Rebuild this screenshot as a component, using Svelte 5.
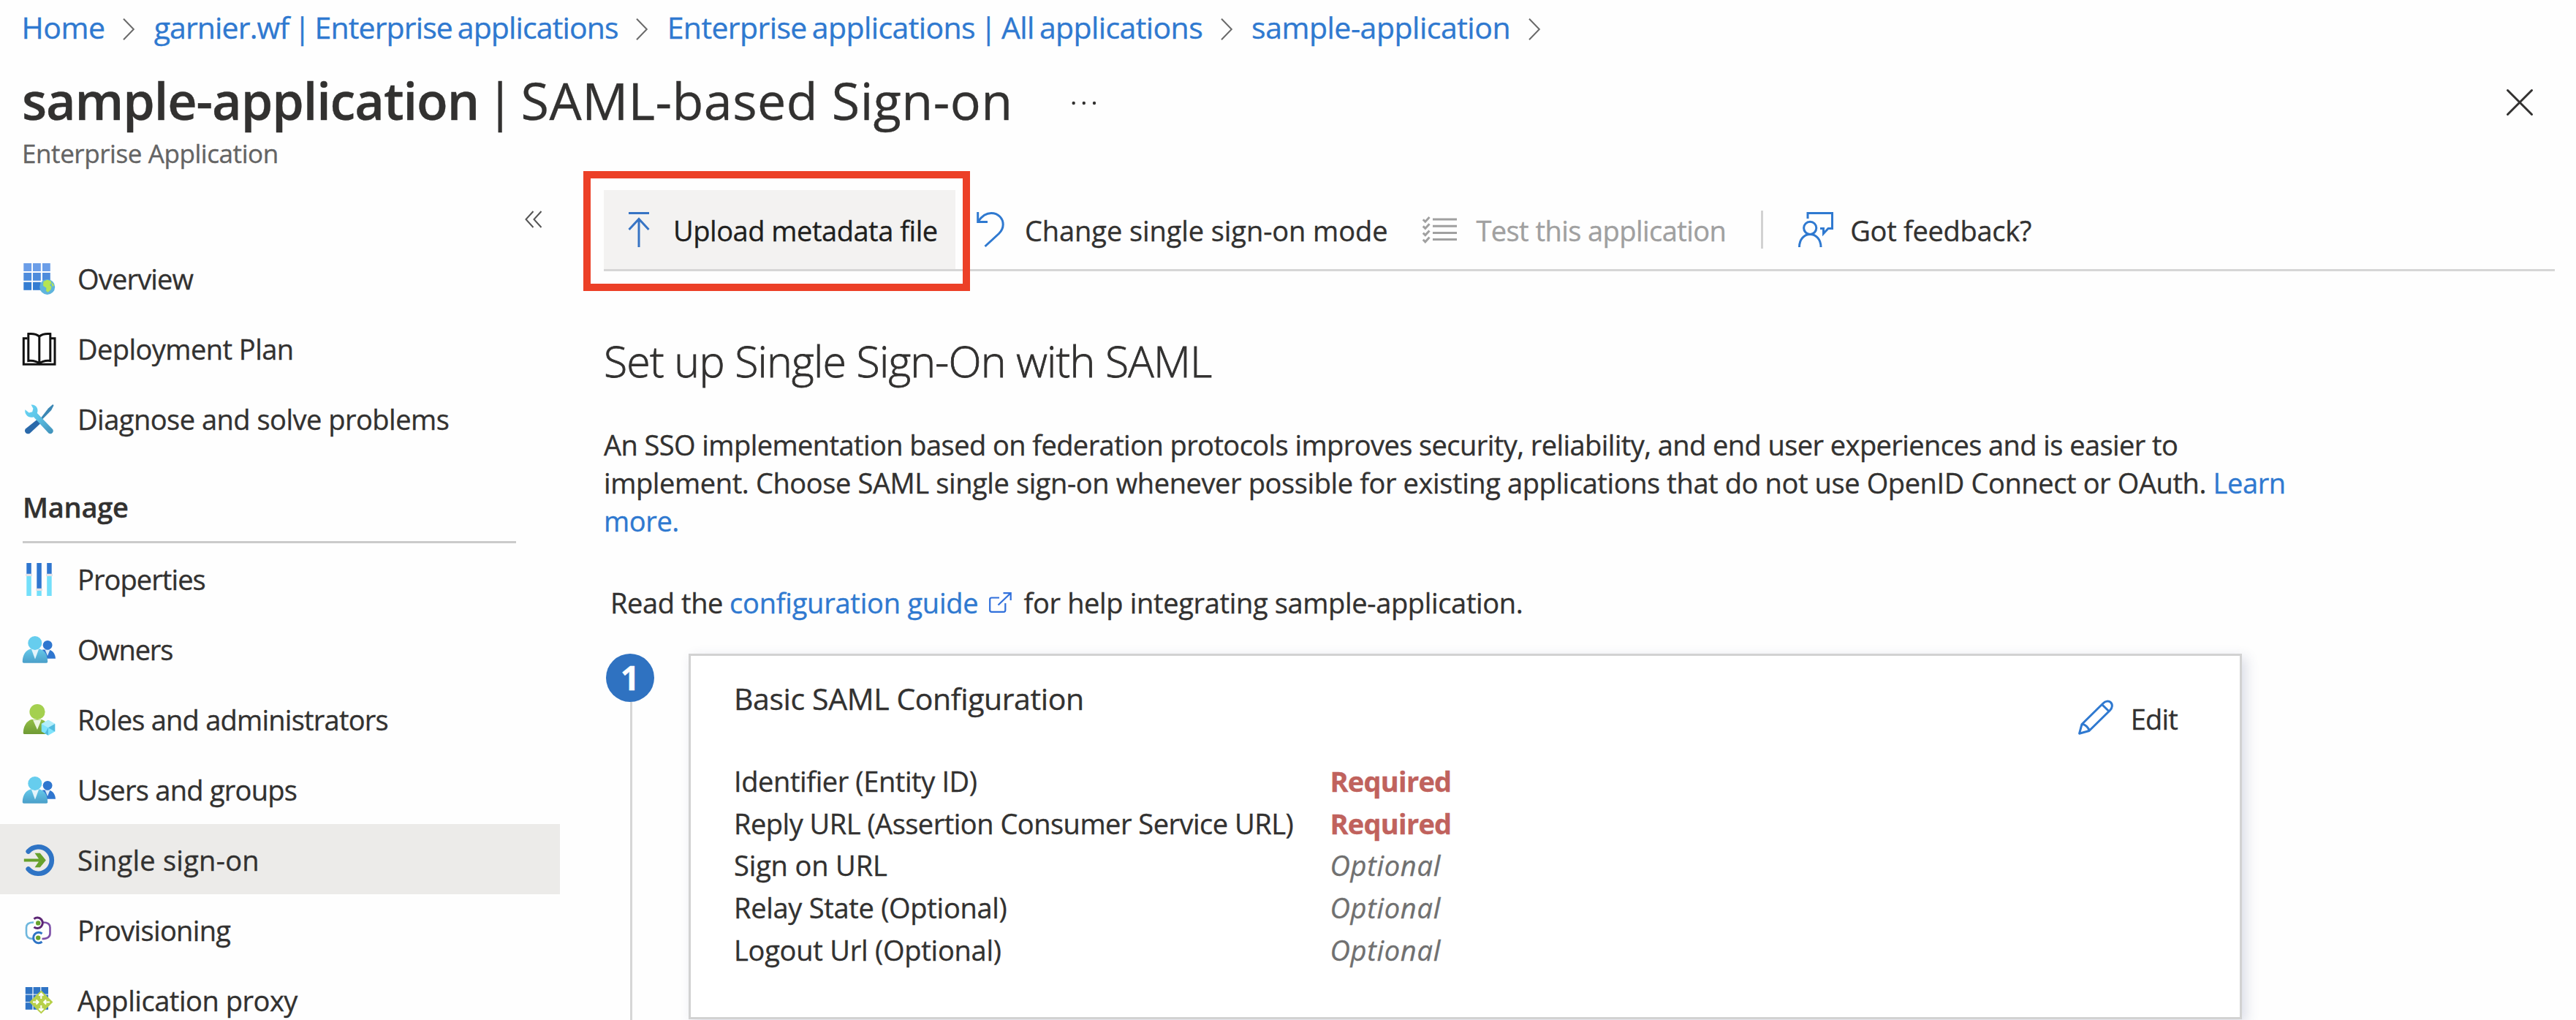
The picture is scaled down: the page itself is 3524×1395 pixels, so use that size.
<script>
  // `track` is the letter-spacing (px) of each label.
  const crumbs = [
    { text: 'Home', track: -0.43 },
    { text: 'garnier.wf | Enterprise applications', track: -0.87 },
    { text: 'Enterprise applications | All applications', track: -0.6 },
    { text: 'sample-application', track: -0.49 }
  ];
  const general = [
    { icon: 'overview', text: 'Overview', track: -0.82 },
    { icon: 'book', text: 'Deployment Plan', track: -0.55 },
    { icon: 'tools', text: 'Diagnose and solve problems', track: -0.5 }
  ];
  const manage = [
    { icon: 'properties', text: 'Properties', track: -0.92 },
    { icon: 'people', text: 'Owners', track: -1.2 },
    { icon: 'roles', text: 'Roles and administrators', track: -0.76 },
    { icon: 'people', text: 'Users and groups', track: -0.73 },
    { icon: 'sso', text: 'Single sign-on', track: 0.26, selected: true },
    { icon: 'provisioning', text: 'Provisioning', track: -0.66 },
    { icon: 'proxy', text: 'Application proxy', track: -0.46 }
  ];
  const fields = [
    { label: 'Identifier (Entity ID)', track: -0.4, required: true },
    { label: 'Reply URL (Assertion Consumer Service URL)', track: -0.5, required: true },
    { label: 'Sign on URL', track: -0.15, required: false },
    { label: 'Relay State (Optional)', track: -0.29, required: false },
    { label: 'Logout Url (Optional)', track: -0.24, required: false }
  ];
</script>

{#snippet navIcon(name)}
  <svg class="nav-icon" viewBox="0 0 48 48">
    {#if name === 'overview'}
      {#each [2.3, 15, 28] as x}
        <rect {x} y="4" width="10.8" height="11" fill="#6b9ee8" />
        <rect {x} y="17" width="10.8" height="10.8" fill="#4e8cdc" />
        <rect {x} y="29.8" width="10.8" height="11" fill="#347dd2" />
      {/each}
      <circle cx="34.7" cy="36.4" r="10.5" fill="#5fb4dd" />
      <path d="M29.5 29l5-2.3 5 1.500 1 3-2.500 2.500 2.500 2.500-1 4-4 3.500-2.500-2 .5-4-4.500-3zM41.500 30.500l2.500 4-2 1.500-1.500-3z" fill="#b5e553" />
    {:else if name === 'book'}
      <g fill="none" stroke="#111" stroke-width="3">
        <path d="M7.500 10.800H2.300V46.200H45V10.800H39.800" />
        <path d="M8.800 4.600c6.500-.6 11.500.4 15 3.600 3.500-3.200 8-4.200 15-3.600V41.500c-6.500-.6-11.500.6-15 4-3.500-3.400-8.500-4.600-15-4zM23.800 8v38" />
      </g>
    {:else if name === 'tools'}
      <path d="M42.300 5l1.200 1.500-3.300 6.500L28 25.500l-2-2L36 10.500z" fill="#3b87b4" />
      <path d="M20.500 26l5 5L11 44.500c-2 1.500-4.500.8-6-.8-1.500-1.800-1.300-4 .2-5.400z" fill="#2a69aa" />
      <path d="M12.500 5.600c6-.9 11 5 8.300 11.400L42 39c2.600 3.500-1.700 8.200-5.500 5.500L16 22.200C9.500 24.800 3 18.500 4.400 12.200l5.300 4.300 4.500-1.300 1.200-4.500z" fill="url(#wrench)" />
    {:else if name === 'properties'}
      <path d="M6.300 3h6.500v15H6.300zM20.300 3h6.500v35h-6.500zM34.200 3h6.500v15h-6.500z" fill="#2f76cf" />
      <path d="M6.300 21h6.500v27H6.300zM20.300 41h6.500v7h-6.500zM34.200 21h6.500v27h-6.500z" fill="#74dffa" />
      <path d="M5.300 17.700h8.700V21H5.300zM19.300 37.700H28V41h-8.700zM33.200 17.700h8.700V21h-8.700z" fill="#e2e2e6" />
    {:else if name === 'people'}
      <path d="M28 25.500h9c6 1.500 8.500 6.500 9 12.200H30z" fill="#2f76cf" />
      <path d="M31.500 25.500h7L35 34z" fill="#dcebf8" />
      <circle cx="35.100" cy="19.300" r="6.400" fill="#2f76cf" />
      <path d="M.800 42c0-8 3.500-15.500 11-17.500h12.500c7.500 2 10.900 9.500 10.900 17.500 0 1-.8 1.700-1.800 1.700H2.600c-1 0-1.800-.7-1.800-1.700z" fill="url(#body)" />
      <path d="M13 25h10l-5 13.500z" fill="#e4f4fb" />
      <circle cx="17.800" cy="16.400" r="9.500" fill="#66cdee" />
    {:else if name === 'roles'}
      <path d="M1.800 43.200c0-8 4-16 11.200-18.200h14c4.500 1.500 7.500 5 9 9v11H3.600c-1 0-1.800-.8-1.800-1.800z" fill="url(#green)" />
      <path d="M15 25.500h11.500L21 39z" fill="#eef6e2" />
      <circle cx="21" cy="14.600" r="10.600" fill="#a4d04f" />
      <path d="M36 25.700l9.200 5.200v10.600L36 46.700l-9.300-5.200V30.900z" fill="#7fe3fb" />
      <path d="M36 36.200l-9.300-5.300L36 25.700l9.200 5.200z" fill="#b3eefb" />
      <path d="M36 36.200l9.200-5.300v10.600zM36 36.200v10.500l-4.600-2.600z" fill="#52bbdf" />
    {:else if name === 'sso'}
      <path d="M8.700 13.500A18.300 18.300 0 1 1 8.700 37.500" fill="none" stroke="#2f74c5" stroke-width="6.600" stroke-linecap="round" />
      <path d="M2.800 23.400H23l-5.500-7.600h7.300l8 9.700-8 9.700h-7.300l5.500-7.600H2.800z" fill="#67a12c" />
    {:else if name === 'provisioning'}
      <g fill="none" stroke-width="2.600">
        <path d="M16 14.500c-6.500 0-10 2-10 7v8c0 5 3.500 7.500 9 7.500" stroke="#6fb7dd" />
        <path d="M29 14.500c6.500 0 9.500 2 9.500 7v8c0 5-3.500 7.500-11 7.500" stroke="#7d4fa8" />
        <path d="M16.500 9.800A7.200 7.200 0 1 1 16.500 20.800" stroke="#5c2674" stroke-width="3" />
        <path d="M27.500 30A7.200 7.200 0 1 0 27.500 41" stroke="#2f74c5" stroke-width="3" />
      </g>
      <circle cx="22.200" cy="15.400" r="3.200" fill="#67a12c" /><circle cx="22.200" cy="35.600" r="3.200" fill="#67a12c" />
    {:else if name === 'proxy'}
      {#each [4.8, 15.600, 26.400] as x}{#each [7, 17.600, 28.200] as y}
        <rect {x} {y} width="9.600" height="9.600" fill="#2f74c5" />
      {/each}{/each}
      <path d="M26.300 11.600L42.400 27.500 26.300 43.400 10.200 27.500z" fill="#b7d04a" />
      <path d="M26.300 23v-6M26.300 32v6M22 27.500h-7M31 27.500h7M23.300 18.800l3-3.200 3 3.200M23.300 36.200l3 3.200 3-3.200M19.500 24.500l3 3-3 3M33.100 24.500l-3 3 3 3" fill="none" stroke="#fff" stroke-width="2" />
    {/if}
  </svg>
{/snippet}

{#snippet navRow(item)}
  <li class="nav-row" class:selected={item.selected}>
    {@render navIcon(item.icon)}
    <span class="nav-text" style:letter-spacing="{item.track}px">{item.text}</span>
  </li>
{/snippet}

<!-- Gradients shared by the navigation icons -->
<svg class="defs" width="0" height="0">
  <defs>
    <linearGradient id="wrench" x1="0" y1="0" x2="1" y2="1"><stop offset="0" stop-color="#6ad6f5" /><stop offset=".45" stop-color="#5cc3e6" /><stop offset="1" stop-color="#3f8fb8" /></linearGradient>
    <linearGradient id="body" x1="0" y1="0" x2="0" y2="1"><stop offset="0" stop-color="#66c9ea" /><stop offset="1" stop-color="#4a9fc9" /></linearGradient>
    <linearGradient id="green" x1="0" y1="0" x2="0" y2="1"><stop offset="0" stop-color="#93bf45" /><stop offset="1" stop-color="#6f9a35" /></linearGradient>
  </defs>
</svg>

<div class="page">
  <nav class="breadcrumb">
    {#each crumbs as c}
      <a class="link" href="#top" style:letter-spacing="{c.track}px">{c.text}</a>
      <svg class="chevron" viewBox="0 0 16 30"><path d="M1 .8L14.800 15 1 29.200" /></svg>
    {/each}
  </nav>

  <header class="header">
    <h1><b>sample-application</b><span class="bar">|</span><span class="sub">SAML-based Sign-on</span></h1>
    <svg class="more" viewBox="0 0 34 8"><circle cx="2.700" cy="4" r="2.200" /><circle cx="16.800" cy="4" r="2.200" /><circle cx="31" cy="4" r="2.200" /></svg>
    <svg class="close" viewBox="0 0 36 36"><path d="M1.500 1.500l33 33M34.500 1.500l-33 33" /></svg>
  </header>
  <p class="kind">Enterprise Application</p>

  <div class="body">
    <aside class="sidebar">
      <div class="collapse"><svg viewBox="0 0 24 24"><path d="M11.500 1L1.500 12l10 11M22.500 1l-10 11 10 11" /></svg></div>
      <ul>{#each general as item}{@render navRow(item)}{/each}</ul>
      <h3>Manage</h3>
      <ul>{#each manage as item}{@render navRow(item)}{/each}</ul>
    </aside>

    <main>
      <div class="toolbar">
        <button class="tool upload">
          <svg viewBox="0 0 48 48"><path d="M10 1.500h28M24 9.500V48M10.500 24L24 9.500 37.500 24" /></svg>
          <span>Upload metadata file</span>
          <i class="highlight"></i>
        </button>
        <button class="tool change">
          <svg viewBox="0 0 48 48"><path d="M6.700 0V13.500H20M7.500 12.500C13 4.500 19 1.500 25 1.500c10 0 16.200 7.500 16.200 15.500 0 6-2.200 9-5.700 12.500L16.500 47" /></svg>
          <span>Change single sign-on mode</span>
        </button>
        <button class="tool test" disabled>
          <svg viewBox="0 0 48 48"><path d="M14 10h33M14 19.200h33M14 28.400h33M14 37.600h33M.8 10.200l3 3L9.500 7M.8 19.400l3 3 5.700-6.200M.8 28.600l3 3 5.700-6.200M.8 37.800l3 3 5.700-6.200" /></svg>
          <span>Test this application</span>
        </button>
        <div class="divider"></div>
        <button class="tool feedback">
          <svg viewBox="0 0 48 48"><path d="M13 9V1.500H46.500V22.500H41L34.500 29.500V22.500H30" /><circle cx="16.200" cy="21.800" r="8.600" /><path d="M1.500 48C1.500 37.500 8 30.500 16.200 30.500S31 37.500 31 48" /></svg>
          <span>Got feedback?</span>
        </button>
      </div>

      <h2>Set up Single Sign-On with SAML</h2>
      <p class="intro">
        An SSO implementation based on federation protocols improves security, reliability, and end user experiences and is easier to<br />
        <span class="wide">implement. Choose SAML single sign-on whenever possible for existing applications that do not use OpenID Connect or OAuth. <a class="link" href="#learn">Learn<br />more.</a></span>
      </p>
      <div class="guide">
        <span>Read the</span>
        <a class="link" href="#guide">configuration guide</a>
        <svg viewBox="0 0 31 28"><path d="M14 7.500H3.500Q1.200 7.500 1.200 9.800V24.500Q1.200 26.800 3.500 26.800H20Q22.300 26.800 22.300 24.500V15M12.500 17.500L29.500 1.200M19.500 1.200H29.700V11" /></svg>
        <span class="rest">for help integrating sample-application.</span>
      </div>

      <section class="step">
        <div class="rail"><span class="number">1</span><i></i></div>
        <div class="card">
          <div class="details">
            <h4>Basic SAML Configuration</h4>
            <dl>
              {#each fields as f}
                <dt style:letter-spacing="{f.track}px">{f.label}</dt>
                <dd class={f.required ? 'required' : 'optional'}>{f.required ? 'Required' : 'Optional'}</dd>
              {/each}
            </dl>
          </div>
          <button class="edit">
            <svg viewBox="0 0 48 48"><path d="M1.600 46.200L5 33.500 34 5C37 2 41.500 .8 44.500 3.700 47.600 6.800 46.500 11.500 43.500 14.500L15 42.500ZM32.500 6.500L42 15.800M5 33.500C9.500 33.500 14.500 38 15 42.500" /></svg>
            <span>Edit</span>
          </button>
        </div>
      </section>
    </main>
  </div>
</div>

<style>
  :global(body) { background: #fff; overflow: hidden; }
  .page {
    height: 1395px;
    overflow: hidden;
    display: flex;
    flex-direction: column;
    background: #fefefe;
    color: #323130;
    font: 400 38px/52px 'Open Sans', 'Noto Sans', sans-serif;
    white-space: nowrap;
    -webkit-text-stroke: .35px;
  }
  .defs { position: absolute; }
  svg { display: block; flex: none; overflow: visible; }
  h1, h2, h3, h4, p, ul, dl, dd { margin: 0; padding: 0; font-weight: 400; }
  button { font: inherit; color: inherit; background: none; border: 0; padding: 0; margin: 0; }
  .link { color: #2f79d0; text-decoration: none; }

  .breadcrumb { flex: none; display: flex; align-items: center; height: 74px; padding: 0 0 0 29.5px; font-size: 41px; line-height: 74px; word-spacing: -3px; }
  .chevron { width: 16px; height: 30px; margin: 6px 26.5px 0 24.5px; fill: none; stroke: #6a6a6a; stroke-width: 2; }

  .header { flex: none; display: flex; align-items: center; height: 126px; padding: 0 59px 0 30px; }
  h1 { display: flex; font-size: 70px; line-height: 127px; }
  h1 b { font-weight: 600; letter-spacing: -1.05px; }
  .bar { margin: 0 9px 0 10px; }
  .sub { letter-spacing: .47px; }
  .more { width: 34px; height: 8px; margin: 7px 0 0 80px; fill: #323130; }
  .close { width: 36px; height: 36px; margin: 6px 0 0 auto; fill: none; stroke: #323130; stroke-width: 3; stroke-linecap: round; }
  .kind { flex: none; padding-left: 30px; font-size: 35px; line-height: 20px; letter-spacing: -.42px; color: #646464; }

  .body { flex: 1; min-height: 0; display: flex; }
  .sidebar { flex: none; width: 766px; }
  .collapse { box-sizing: border-box; height: 112px; padding: 68px 24px 0 0; display: flex; justify-content: flex-end; }
  .collapse svg { width: 24px; height: 24px; fill: none; stroke: #555; stroke-width: 2; }
  ul { list-style: none; }
  .nav-row { display: flex; align-items: center; gap: 28px; height: 96px; padding-left: 30px; }
  .nav-row.selected { background: #ecebe9; }
  .nav-icon { width: 48px; height: 48px; }
  .nav-text { padding-top: 2px; }
  h3 { box-sizing: border-box; width: 675px; height: 123px; margin-left: 31px; padding-top: 47px; border-bottom: 3px solid #cbcbcb; font-size: 38px; font-weight: 600; letter-spacing: -.25px; }

  main { flex: 1; min-width: 0; padding: 40px 29px 0 60px; }
  .toolbar { display: flex; align-items: center; height: 108px; border-bottom: 3px solid #d6d6d6; }
  .tool { position: relative; display: flex; align-items: center; gap: 23px; height: 108px; }
  .tool svg { width: 48px; height: 48px; fill: none; stroke: #2f79d0; stroke-width: 3; }
  .tool span { padding-top: 2px; }
  .upload { width: 481px; padding-left: 24px; background: #f3f2f1; color: #201f1e; letter-spacing: -.47px; }
  .upload svg { stroke: #3774c4; }
  .highlight { position: absolute; left: -28px; top: -26px; width: 509px; height: 144px; border: 10px solid #ec4027; }
  .change { margin-left: 24px; letter-spacing: -.08px; }
  .test { margin-left: 48px; gap: 25px; color: #a0a0a0; letter-spacing: -.56px; }
  .test svg { stroke: #a0a0a0; }
  .divider { width: 3px; height: 52px; margin: 0 48px; background: #d2d2d2; }
  .feedback { letter-spacing: -.29px; }

  h2 { margin-top: 80px; font-size: 59px; font-weight: 300; line-height: 84px; letter-spacing: -.82px; -webkit-text-stroke: .8px; }
  .intro { margin-top: 47px; line-height: 52.2px; letter-spacing: -.57px; }
  .wide { letter-spacing: -.39px; }
  .guide { display: flex; align-items: center; margin-top: 59px; padding-left: 9px; letter-spacing: -.4px; }
  .guide .link { margin-left: 9px; letter-spacing: -.22px; }
  .guide svg { width: 31px; height: 28px; margin: 0 16px 0 15px; fill: none; stroke: #2f6fdb; stroke-width: 2.200; }
  .rest { letter-spacing: -.34px; }

  .step { display: flex; margin-top: 44px; padding-left: 3px; }
  .rail { width: 66px; height: 501px; display: flex; flex-direction: column; align-items: center; }
  .number { width: 66px; height: 66px; border-radius: 50%; background: #2f72c1; color: #fff; font-size: 46px; font-weight: 700; line-height: 64px; text-align: center; }
  .rail i { flex: 1; width: 3px; margin-left: 2px; background: #d6d6d6; }
  .card { box-sizing: border-box; display: flex; justify-content: space-between; align-items: flex-start; width: 2125px; height: 500px; margin-left: 47px; padding: 28px 85px 0 59px; border: 3px solid #d2d2d2; background: #fff; box-shadow: 6px 5px 16px rgba(50, 60, 120, .17); }
  h4 { font-size: 41px; line-height: 60px; letter-spacing: -.4px; }
  dl { display: grid; grid-template-columns: 815.5px auto; grid-auto-rows: 57.9px; margin-top: 55px; line-height: 57.9px; }
  .required { color: #c0625d; font-weight: 700; letter-spacing: -.75px; }
  .optional { color: #707070; font-style: italic; letter-spacing: .7px; }
  .edit { display: flex; align-items: center; gap: 24px; margin-top: 28px; line-height: 60px; letter-spacing: -.8px; }
  .edit svg { width: 48px; height: 48px; margin-top: -4px; fill: none; stroke: #2f79d0; stroke-width: 3; stroke-linejoin: round; }
</style>
